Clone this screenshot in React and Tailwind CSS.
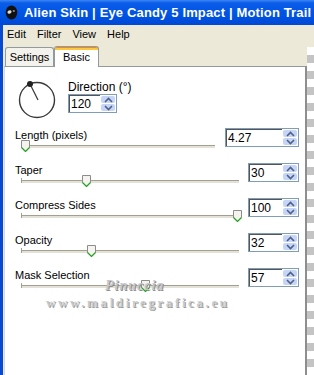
import React from 'react';

const sliders = [
  { label: 'Length (pixels)', value: '4.27', pct: 2, wide: true },
  { label: 'Taper', value: '30', pct: 30 },
  { label: 'Compress Sides', value: '100', pct: 99 },
  { label: 'Opacity', value: '32', pct: 32 },
  { label: 'Mask Selection', value: '57', pct: 57 },
];

const Arrow = ({ up }) => (
  <svg width="9" height="6" viewBox="0 0 9 6" className="block">
    <path
      d={up ? 'M1 5 L4.5 1.5 L8 5' : 'M1 1 L4.5 4.5 L8 1'}
      fill="none"
      stroke="#4d6185"
      strokeWidth="1.6"
    />
  </svg>
);

const SpinBox = ({ value, className = '' }) => (
  <div className={`flex h-[19px] border border-[#7f9db9] bg-white ${className}`}>
    <div className="flex-1 border-l border-t border-[#555] pl-[1px] text-[12px] leading-[16px] text-black">
      {value}
    </div>
    <div className="flex w-[16px] flex-col gap-[1px] bg-white p-[1px]">
      <div className="flex flex-1 items-center justify-center rounded-[2px] bg-[#c6d5f7]">
        <Arrow up />
      </div>
      <div className="flex flex-1 items-center justify-center rounded-[2px] bg-[#c6d5f7]">
        <Arrow />
      </div>
    </div>
  </div>
);

const Thumb = () => (
  <svg width="9" height="12" viewBox="0 0 9 12" className="block">
    <path d="M0.5 0.5 H8.5 V7.5 L4.5 11.5 L0.5 7.5 Z" fill="#f4f3ee" stroke="#8c8c8c" />
    <path d="M0.5 7.5 L4.5 11.5 L8.5 7.5" fill="none" stroke="#21a121" strokeWidth="1.2" />
  </svg>
);

const SliderRow = ({ label, value, pct, wide }) => (
  <div className="flex h-[35px] items-start pl-[10px] pr-[6px]">
    <div className="flex flex-1 flex-col">
      <div className="h-[17px] text-[11px] leading-[15px] text-black">{label}</div>
      <div className={`relative ml-[6px] h-[3px] border-t border-[#a3a091] bg-[#e4e2d8] ${wide ? 'mr-[10px]' : 'mr-[9px]'}`}>
        <div className="absolute left-0 top-[-3px] h-[5px] w-px bg-[#a3a091]" />
        <div className="absolute top-[-6px] -ml-[4px]" style={{ left: `${pct}%` }}>
          <Thumb />
        </div>
      </div>
    </div>
    <SpinBox value={value} className={wide ? 'w-[74px]' : 'w-[51px]'} />
  </div>
);

export default function App() {
  return (
    <div className="flex h-[375px] w-[314px] flex-col overflow-hidden bg-[#ece9d8] font-['Liberation_Sans',Arial,sans-serif]">
      {/* title bar */}
      <div className="flex h-[25px] items-center gap-[6px] bg-[linear-gradient(180deg,#3d86f5_0%,#0a5ce8_12%,#0053e2_60%,#0048d6_100%)] pl-[5px]">
        <svg width="13" height="15" viewBox="0 0 13 15" className="shrink-0">
          <ellipse cx="6.5" cy="7.5" rx="5.8" ry="7" fill="#111" />
          <ellipse cx="4.5" cy="7" rx="2.2" ry="1.6" fill="#ddd" transform="rotate(-30 4.5 7)" />
          <ellipse cx="8.8" cy="6" rx="1.2" ry="1" fill="#888" />
        </svg>
        <div className="whitespace-nowrap text-[13px] font-bold tracking-[0.15px] text-white">
          Alien Skin | Eye Candy 5 Impact | Motion Trail
        </div>
      </div>

      <div className="flex min-h-0 flex-1">
        <div className="w-[3px] bg-[#0849d3]" />

        <div className="flex flex-1 flex-col">
          {/* menu */}
          <div className="flex h-[19px] items-center gap-[11px] pl-[4px] text-[11px] text-black">
            <span>Edit</span>
            <span>Filter</span>
            <span>View</span>
            <span>Help</span>
          </div>

          {/* tabs */}
          <div className="flex items-end pl-[2px] pt-[2px]">
            <div className="flex h-[19px] w-[49px] items-center justify-center rounded-t-[3px] border border-b-0 border-[#919b9c] bg-[#f3f2ec] text-[11px] text-black">
              Settings
            </div>
            <div className="z-10 -mb-px flex h-[21px] w-[45px] flex-col rounded-t-[3px] border border-b-0 border-[#919b9c] bg-white">
              <div className="h-[3px] rounded-t-[2px] border-t border-[#e68b2c] bg-[#ffc73c]" />
              <div className="pl-[8px] text-[11px] leading-[14px] text-black">Basic</div>
            </div>
          </div>

          {/* panel */}
          <div className="relative ml-[1px] flex flex-1 flex-col border-l border-t border-r-2 border-l-[#d8d8d8] border-t-[#919b9c] border-r-[#8e8e8e] bg-white">
            <div className="flex h-[61px] items-start pl-[13px] pt-[13px]">
              <svg width="40" height="40" viewBox="0 0 40 40">
                <circle cx="19" cy="20" r="17.5" fill="none" stroke="#3a3a3a" strokeWidth="1.4" />
                <line x1="12" y1="4" x2="20" y2="20" stroke="#3a3a3a" strokeWidth="1.3" />
                <circle cx="12" cy="4" r="3" fill="#222" />
              </svg>
              <div className="ml-[10px] flex flex-col">
                <div className="h-[14px] text-[12px] leading-[14px] text-black">Direction (°)</div>
                <SpinBox value="120" className="w-[49px]" />
              </div>
            </div>

            {sliders.map((s) => (
              <SliderRow key={s.label} {...s} />
            ))}

            {/* watermark */}
            <div className="pointer-events-none absolute left-[100px] top-[208px] font-['Liberation_Serif',serif] text-[14px] font-bold italic tracking-[1px] text-[#c6c6c6] [text-shadow:1px_1px_0_#8e8e8e]">
              Pinuccia
            </div>
            <div className="pointer-events-none absolute left-[41px] top-[226px] font-['Liberation_Serif',serif] text-[13px] font-bold tracking-[2.6px] text-[#cccccc] [text-shadow:1px_1px_0_#9a9a9a]">
              www.maldiregrafica.eu
            </div>
          </div>
        </div>

        <div className="flex w-[7px] flex-col">
          <div className="h-[22px]" />
          <div className="flex-1 bg-[conic-gradient(#c4c4c4_25%,#ffffff_0_50%,#c4c4c4_0_75%,#ffffff_0)] bg-[length:16px_16px]" />
        </div>
      </div>
    </div>
  );
}
